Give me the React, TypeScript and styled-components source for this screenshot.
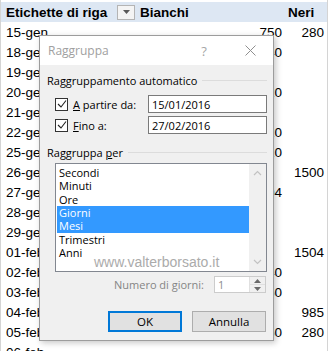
import * as React from 'react';
import styled, { createGlobalStyle } from 'styled-components';

const GlobalStyle = createGlobalStyle`
  html, body {
    margin: 0;
    padding: 0;
    background: #fff;
    overflow: hidden;
  }
`;

const Page = styled.div`
  position: relative;
  width: 329px;
  height: 351px;
  overflow: hidden;
  font-family: "Liberation Sans", Arial, sans-serif;
`;

const Sheet = styled.div`
  padding-top: 2px;
  border-left: 1px solid #d4d4d4;
  border-right: 1px solid #d4d4d4;
  box-sizing: border-box;
  width: 328px;
  height: 351px;
`;

const Row = styled.div<{ $head?: boolean }>`
  display: grid;
  grid-template-columns: 136px 148px 42px;
  height: 20px;
  align-items: center;
  font-size: 13.5px;
  color: #000;
  background: ${p => (p.$head ? '#dde7f3' : 'transparent')};
  font-weight: ${p => (p.$head ? 'bold' : 'normal')};
`;

const LabelCell = styled.div`
  display: flex;
  align-items: center;
  justify-content: space-between;
  padding: 0 2px 0 5px;
  white-space: nowrap;
`;

const NumCell = styled.div<{ $align?: string }>`
  text-align: ${p => p.$align || 'right'};
  padding: 0 3px 0 3px;
  white-space: nowrap;
`;

const FilterButton = styled.div`
  width: 16px;
  height: 13px;
  border: 1px solid #b4b4b4;
  background: #f4f4f4;
  display: flex;
  align-items: center;
  justify-content: center;
`;

/* dialog */
const Dialog = styled.div`
  position: absolute;
  left: 39px;
  top: 35px;
  width: 235px;
  height: 306px;
  box-sizing: border-box;
  border: 1px solid #9c9c9c;
  box-shadow: 2px 2px 6px rgba(0, 0, 0, 0.22);
  display: flex;
  flex-direction: column;
  font-family: "Open Sans", "Noto Sans", sans-serif;
  font-size: 11px;
  color: #000;
`;

const TitleBar = styled.div`
  height: 29px;
  background: #fff;
  display: flex;
  align-items: center;
  padding-left: 8px;
`;

const Title = styled.div`
  flex: 1;
  color: #a0a0a0;
  font-size: 12px;
`;

const TitleButton = styled.div`
  width: 46px;
  height: 29px;
  display: flex;
  align-items: center;
  justify-content: center;
  color: #a6a6a6;
  font-size: 13px;
`;

const Body = styled.div`
  flex: 1;
  background: #f0f0f0;
  padding: 8px 6px 0 7px;
  display: flex;
  flex-direction: column;
`;

const GroupHeader = styled.div<{ $gap?: number }>`
  display: flex;
  align-items: center;
  height: 14px;
  gap: 5px;
  margin-top: ${p => p.$gap || 0}px;
  &::after {
    content: '';
    flex: 1;
    height: 1px;
    background: #dcdcdc;
  }
`;

const CheckRow = styled.div<{ $gap: number }>`
  display: flex;
  align-items: center;
  height: 18px;
  padding-left: 8px;
  margin-top: ${p => p.$gap}px;
`;

const CheckBox = styled.div`
  width: 11px;
  height: 11px;
  border: 1px solid #333;
  background: #fff;
  display: flex;
  align-items: center;
  justify-content: center;
`;

const CheckLabel = styled.div`
  width: 75px;
  margin-left: 5px;
  box-sizing: border-box;
`;

const TextInput = styled.div`
  flex: 1;
  height: 18px;
  box-sizing: border-box;
  border: 1px solid #7a7a7a;
  background: #fff;
  padding-left: 3px;
  display: flex;
  align-items: center;
`;

const ListBox = styled.div`
  position: relative;
  margin: 4px 0 0 8px;
  height: 109px;
  box-sizing: border-box;
  border: 1px solid #828790;
  background: #fff;
  display: flex;
`;

const Items = styled.div`
  flex: 1;
  padding: 2px 0 0 1px;
`;

const Item = styled.div<{ $selected?: boolean }>`
  height: 13.33px;
  line-height: 13px;
  padding-left: 2px;
  background: ${p => (p.$selected ? '#3399ff' : 'transparent')};
  color: ${p => (p.$selected ? '#fff' : '#000')};
`;

const ScrollBar = styled.div`
  width: 17px;
  background: #f0f0f0;
  display: flex;
  flex-direction: column;
  justify-content: space-between;
  align-items: center;
  padding: 6px 0;
`;

const Watermark = styled.div`
  position: absolute;
  left: 38px;
  top: 90px;
  font-family: "Liberation Sans", Arial, sans-serif;
  font-size: 14px;
  color: #ababab;
`;

const SpinRow = styled.div`
  margin-top: 4px;
  height: 17px;
  display: flex;
  justify-content: flex-end;
  align-items: center;
  gap: 10px;
  padding-right: 1px;
  color: #858585;
`;

const SpinBox = styled.div`
  width: 52px;
  height: 17px;
  box-sizing: border-box;
  border: 1px solid #cccccc;
  background: #fff;
  display: flex;
`;

const SpinValue = styled.div`
  flex: 1;
  padding-left: 3px;
  color: #8d8d8d;
  display: flex;
  align-items: center;
`;

const SpinButtons = styled.div`
  width: 15px;
  display: flex;
  flex-direction: column;
  border-left: 1px solid #e0e0e0;
`;

const SpinArrow = styled.div`
  flex: 1;
  background: #f0f0f0;
  display: flex;
  align-items: center;
  justify-content: center;
  & + & {
    border-top: 1px solid #e0e0e0;
  }
`;

const ButtonRow = styled.div`
  margin-top: 18px;
  display: flex;
  justify-content: flex-end;
  gap: 10px;
  padding-right: 1px;
`;

const Button = styled.div<{ $primary?: boolean }>`
  width: 74px;
  height: 21px;
  box-sizing: border-box;
  background: #e1e1e1;
  border: ${p => (p.$primary ? '2px solid #0078d7' : '1px solid #adadad')};
  display: flex;
  align-items: center;
  justify-content: center;
  font-size: 11.5px;
`;

const rows: [string, string, string][] = [
  ['15-gen', '750', '280'],
  ['18-gen', '240', ''],
  ['19-gen', '', ''],
  ['20-gen', '120', ''],
  ['21-gen', '', ''],
  ['22-gen', '120', ''],
  ['25-gen', '110', ''],
  ['26-gen', '', '1500'],
  ['27-gen', '1004', ''],
  ['28-gen', '', ''],
  ['29-gen', '', ''],
  ['01-feb', '', '1504'],
  ['02-feb', '240', ''],
  ['03-feb', '150', ''],
  ['04-feb', '', '985'],
  ['05-feb', '350', '280'],
  ['06-feb', '', ''],
];

const units = ['Secondi', 'Minuti', 'Ore', 'Giorni', 'Mesi', 'Trimestri', 'Anni'];
const selected = ['Giorni', 'Mesi'];

const Check = () => (
  <svg width="10" height="10" viewBox="0 0 10 10">
    <path d="M1 5 L4 8 L9 1.5" fill="none" stroke="#222" strokeWidth="1.1" />
  </svg>
);

const Chevron = ({ down }: { down?: boolean }) => (
  <svg width="9" height="6" viewBox="0 0 9 6">
    <path d={down ? 'M1 1 L4.5 4.5 L8 1' : 'M1 5 L4.5 1.5 L8 5'} fill="none" stroke="#c2c2c2" strokeWidth="1.2" />
  </svg>
);

const Triangle = ({ down }: { down?: boolean }) => (
  <svg width="7" height="4" viewBox="0 0 7 4">
    <path d={down ? 'M0 0 L7 0 L3.5 4 Z' : 'M0 4 L7 4 L3.5 0 Z'} fill="#6a6a6a" />
  </svg>
);

export default function App() {
  return (
    <Page>
      <GlobalStyle />
      <Sheet>
        <Row $head>
          <LabelCell>
            Etichette di riga
            <FilterButton>
              <svg width="7" height="4" viewBox="0 0 7 4">
                <path d="M0 0 L7 0 L3.5 4 Z" fill="#595959" />
              </svg>
            </FilterButton>
          </LabelCell>
          <NumCell $align="left">Bianchi</NumCell>
          <NumCell $align="left">Neri</NumCell>
        </Row>
        {rows.map(([label, b, n]) => (
          <Row key={label}>
            <LabelCell>{label}</LabelCell>
            <NumCell>{b}</NumCell>
            <NumCell>{n}</NumCell>
          </Row>
        ))}
      </Sheet>

      <Dialog>
        <TitleBar>
          <Title>Raggruppa</Title>
          <TitleButton>?</TitleButton>
          <TitleButton>
            <svg width="11" height="11" viewBox="0 0 11 11">
              <path d="M0.5 0.5 L10.5 10.5 M10.5 0.5 L0.5 10.5" stroke="#8f8f8f" strokeWidth="1" />
            </svg>
          </TitleButton>
        </TitleBar>
        <Body>
          <GroupHeader>Raggruppamento automatico</GroupHeader>
          <CheckRow $gap={8}>
            <CheckBox><Check /></CheckBox>
            <CheckLabel><u>A</u> partire da:</CheckLabel>
            <TextInput>15/01/2016</TextInput>
          </CheckRow>
          <CheckRow $gap={3}>
            <CheckBox><Check /></CheckBox>
            <CheckLabel><u>F</u>ino a:</CheckLabel>
            <TextInput>27/02/2016</TextInput>
          </CheckRow>
          <GroupHeader $gap={11}>
            <span>Raggruppa <u>p</u>er</span>
          </GroupHeader>
          <ListBox>
            <Items>
              {units.map(u => (
                <Item key={u} $selected={selected.includes(u)}>{u}</Item>
              ))}
            </Items>
            <ScrollBar>
              <Chevron />
              <Chevron down />
            </ScrollBar>
            <Watermark>www.valterborsato.it</Watermark>
          </ListBox>
          <SpinRow>
            Numero di giorni:
            <SpinBox>
              <SpinValue>1</SpinValue>
              <SpinButtons>
                <SpinArrow><Triangle /></SpinArrow>
                <SpinArrow><Triangle down /></SpinArrow>
              </SpinButtons>
            </SpinBox>
          </SpinRow>
          <ButtonRow>
            <Button $primary>OK</Button>
            <Button>Annulla</Button>
          </ButtonRow>
        </Body>
      </Dialog>
    </Page>
  );
}
